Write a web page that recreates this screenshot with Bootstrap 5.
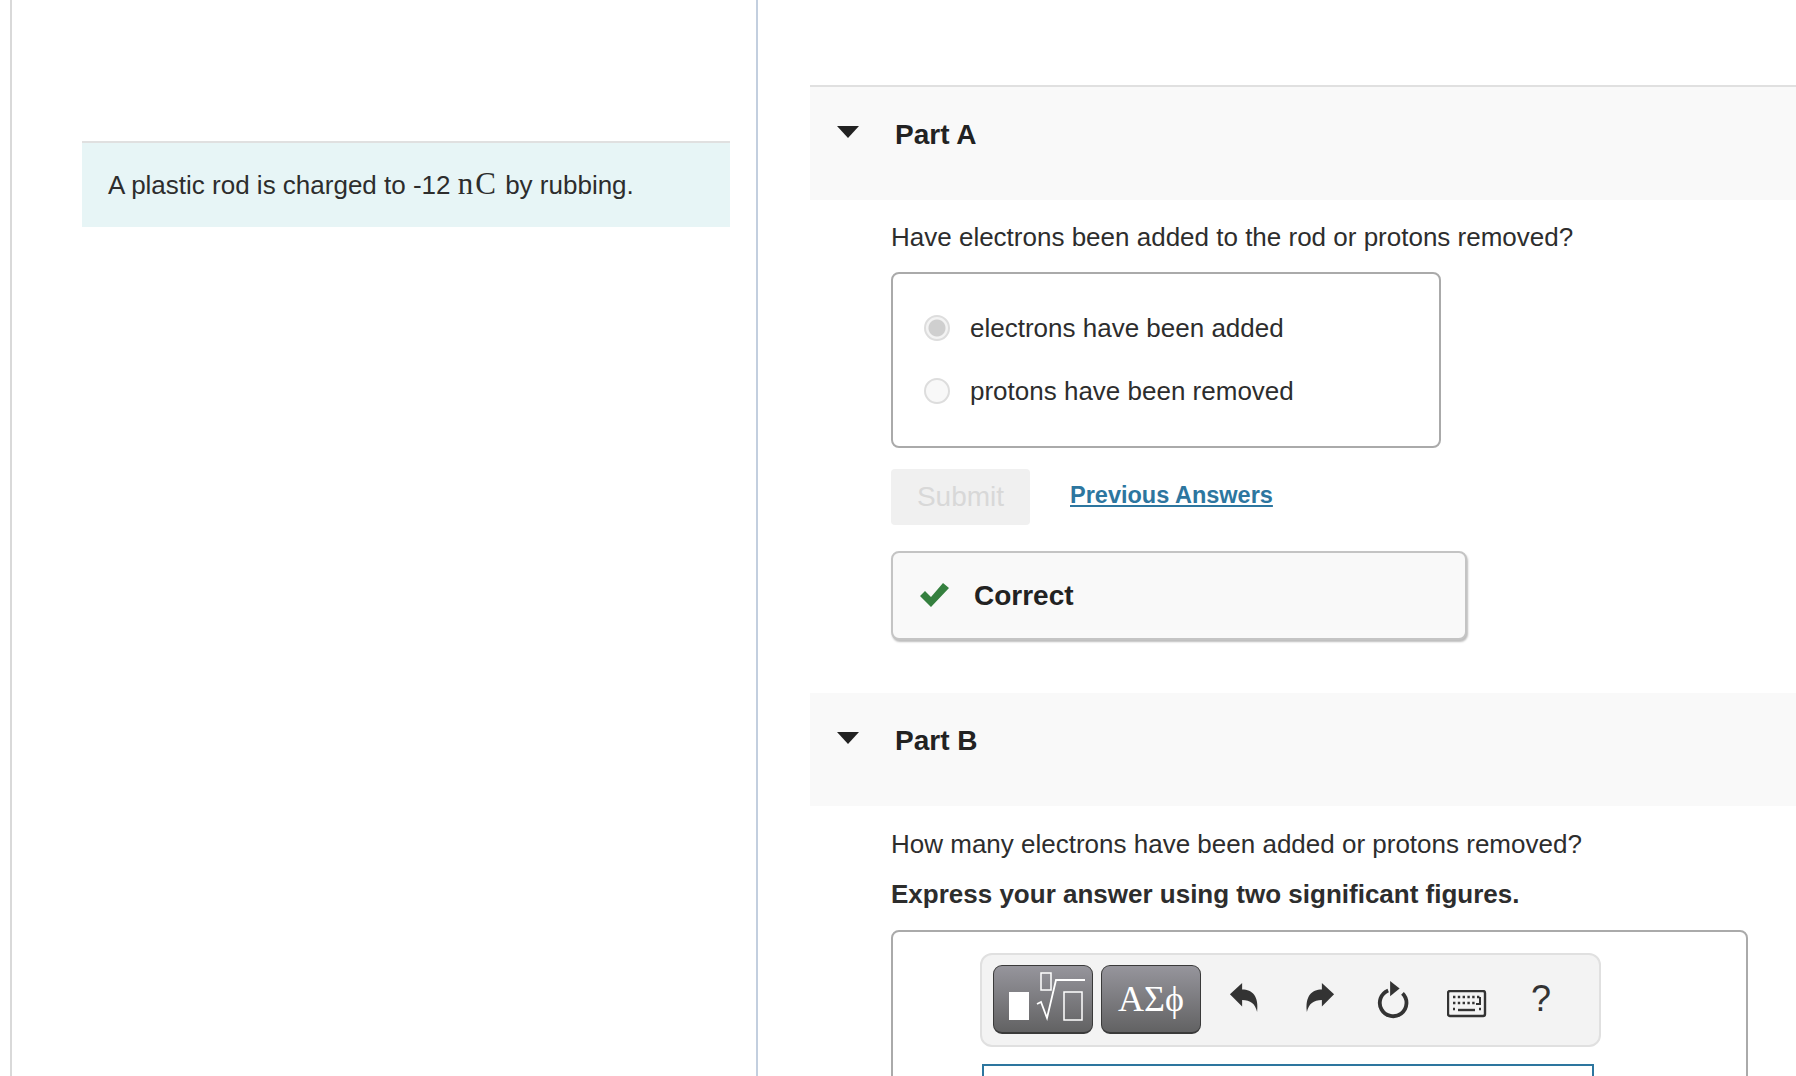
<!DOCTYPE html>
<html lang="en">
<head>
  <meta charset="UTF-8">
  <title>Part A and Part B</title>
  <link href="https://cdn.jsdelivr.net/npm/bootstrap@5.3.3/dist/css/bootstrap.min.css" rel="stylesheet">
  <style>
    html, body { height: 100%; overflow: hidden; }
    body { font-family: "Liberation Sans", Arial, sans-serif; font-size: 26px; line-height: 34px; color: #2d2d2d; background: #fff; }
    .page-wrap { height: 1076px; overflow: hidden; padding-left: 10px; }
    .intro-pane { width: 748px; flex: none; border-left: 2px solid #d9d9d9; border-right: 2px solid #c3cfdf; padding: 141px 26px 0 70px; }
    .intro-box { background: #e7f5f6; border-top: 2px solid #e0e0e0; height: 86px; padding: 0 26px 2px; display: flex; align-items: center; }
    .math-txt { font-family: "Liberation Serif", serif; font-size: 31px; letter-spacing: 2px; }
    .parts-pane { flex: 1; min-width: 0; height: 1076px; overflow: hidden; padding: 85px 0 0 52px; }
    .part-head { background: #f9f9f9; height: 113px; padding: 31px 0 0 27px; gap: 36px; }
    .part-head.first-part { height: 115px; border-top: 2px solid #e0e0e0; }
    .part-head h2 { font-size: 28px; font-weight: 700; line-height: 34px; margin: 0; color: #222; }
    .tri-down { width: 0; height: 0; border-left: 11px solid transparent; border-right: 11px solid transparent; border-top: 12px solid #222; margin-top: 8px; }
    .part-body { padding-left: 81px; }
    .q-text { margin: 20px 0 0; }
    .q-text.second-q { margin-top: 21px; }
    .choice-box { width: 550px; height: 176px; margin-top: 18px; border: 2px solid #aaa; border-radius: 8px; padding: 22px 0 0 31px; }
    .choice-row { height: 63px; gap: 20px; }
    .choice-row .form-check-input { width: 26px; height: 26px; margin: 0; flex: none; border: 2px solid #ddd; background-color: #f8f8f8; opacity: 1; }
    .choice-row .form-check-input:checked { background-image: radial-gradient(circle, #cfcfcf 0 8px, #f3f3f3 9px); border-color: #ddd; }
    .choice-row .form-check-label { opacity: 1 !important; color: #2d2d2d; padding-top: 1px; }
    .submit-row { margin-top: 21px; gap: 40px; }
    .btn-submit, .btn-submit:disabled { width: 139px; height: 56px; background: #f0f0f0; border: 0; border-radius: 4px; color: #d8d8d8; font-size: 28px; line-height: 34px; padding: 0; opacity: 1; }
    .prev-link { color: #2d769f; font-size: 23.5px; font-weight: 700; margin-top: -5px; }
    .correct-box { width: 576px; height: 89px; margin-top: 26px; background: #f9f9f9; border: 2px solid #c4c4c4; border-radius: 8px; box-shadow: 1px 2px 2px #bdbdbd; padding: 0 0 0 27px; gap: 25px; font-size: 28px; font-weight: 700; color: #222; }
    .correct-box svg { margin-bottom: 2px; }
    .gap-after { height: 53px; }
    .answer-box { width: 857px; height: 300px; margin-top: 19px; border: 2px solid #aaa; border-radius: 8px; padding: 21px 0 0 87px; }
    .tool-bar { width: 621px; height: 94px; background: #f3f3f3; border: 2px solid #e0e0e0; border-radius: 12px; padding: 10px 0 0 11px; }
    .tmpl-btn { width: 100px; height: 69px; padding: 0; border: 1px solid #3a3a3a; border-bottom-width: 2px; border-radius: 9px; background: linear-gradient(#96959c, #626263); color: #fff; display: flex; align-items: center; justify-content: center; font-family: "Liberation Serif", serif; font-size: 36px; line-height: 1; margin-right: 8px; }
    .tool-ico { flex: none; color: #333; }
    .help-mark { font-size: 36px; color: #333; line-height: 34px; }
    .math-input { width: 612px; height: 100px; margin: 17px 0 0 2px; border: 2px solid #2d769f; }
  </style>
</head>
<body>
<div class="page-wrap d-flex">
  <!-- Left: problem intro -->
  <div class="intro-pane">
    <div class="intro-box">
      <div>A plastic rod is charged to -12 <span class="math-txt">nC</span> by rubbing.</div>
    </div>
  </div>

  <!-- Right: parts -->
  <div class="parts-pane">
    <div class="part-head first-part d-flex align-items-start">
      <span class="tri-down"></span>
      <h2>Part A</h2>
    </div>
    <div class="part-body">
      <p class="q-text">Have electrons been added to the rod or protons removed?</p>
      <div class="choice-box">
        <div class="choice-row d-flex align-items-center">
          <input class="form-check-input" type="radio" name="partA" id="optAdded" checked disabled>
          <label class="form-check-label" for="optAdded">electrons have been added</label>
        </div>
        <div class="choice-row d-flex align-items-center">
          <input class="form-check-input" type="radio" name="partA" id="optRemoved" disabled>
          <label class="form-check-label" for="optRemoved">protons have been removed</label>
        </div>
      </div>
      <div class="submit-row d-flex align-items-center">
        <button class="btn btn-submit" disabled>Submit</button>
        <a href="#" class="prev-link">Previous Answers</a>
      </div>
      <div class="correct-box d-flex align-items-center">
        <svg width="29" height="24" viewBox="0 0 29 24"><path d="M0 13 L5 8 L11 14 L23 0 L29 5 L11 24 Z" fill="#35803f"/></svg>
        <span>Correct</span>
      </div>
    </div>
    <div class="gap-after"></div>

    <div class="part-head d-flex align-items-start">
      <span class="tri-down"></span>
      <h2>Part B</h2>
    </div>
    <div class="part-body">
      <p class="q-text second-q">How many electrons have been added or protons removed?</p>
      <p class="mb-0 mt-3 fw-bold">Express your answer using two significant figures.</p>
      <div class="answer-box">
        <div class="tool-bar d-flex align-items-start">
          <button class="tmpl-btn" aria-label="Templates">
            <svg width="90" height="56" viewBox="-7 0 90 56" fill="none">
              <rect x="4" y="21" width="20" height="28" fill="#fff"/>
              <rect x="36" y="2" width="10" height="17" stroke="#fff" stroke-width="1.5"/>
              <path d="M32 33 L36 31 L42 47 L51 9 L80 9" stroke="#fff" stroke-width="1.8"/>
              <rect x="59" y="21" width="18" height="28" stroke="#fff" stroke-width="1.5"/>
            </svg>
          </button>
          <button class="tmpl-btn" aria-label="Symbols">ΑΣϕ</button>
          <svg class="tool-ico" style="margin:17px 0 0 20px" width="30" height="32" viewBox="0 0 32 34"><path d="M1 13 L14 1 V8 C25 8 32 15 30 32 C28 23 23 19 14 19 V26 Z" fill="currentColor"/></svg>
          <svg class="tool-ico" style="margin:17px 0 0 46px" width="30" height="32" viewBox="0 0 32 34"><path d="M31 13 L18 1 V8 C7 8 0 15 2 32 C4 23 9 19 18 19 V26 Z" fill="currentColor"/></svg>
          <svg class="tool-ico" style="margin:15px 0 0 40px" width="34" height="40" viewBox="0 0 34 42" fill="none"><path d="M13 11 A14 14 0 1 0 28 14" stroke="currentColor" stroke-width="4"/><path d="M15 1 L25 9 L15 17 Z" fill="currentColor"/></svg>
          <svg class="tool-ico" style="margin:25px 0 0 38px" width="40" height="28" viewBox="0 0 40 28" fill="none">
            <rect x="1" y="1" width="37" height="25" rx="2" stroke="currentColor" stroke-width="2.4"/>
            <path d="M6 7h27M6 13h22M6 19h2M32 19h2" stroke="currentColor" stroke-width="2.4" stroke-dasharray="2.4 2.4"/>
            <path d="M11 20h17" stroke="currentColor" stroke-width="2.4"/>
            <path d="M33 7v7h-4" stroke="currentColor" stroke-width="2"/>
          </svg>
          <span class="help-mark" style="margin:17px 0 0 44px">?</span>
        </div>
        <div class="math-input"></div>
      </div>
    </div>
  </div>
</div>
<script src="https://cdn.jsdelivr.net/npm/bootstrap@5.3.3/dist/js/bootstrap.bundle.min.js"></script>
</body>
</html>
